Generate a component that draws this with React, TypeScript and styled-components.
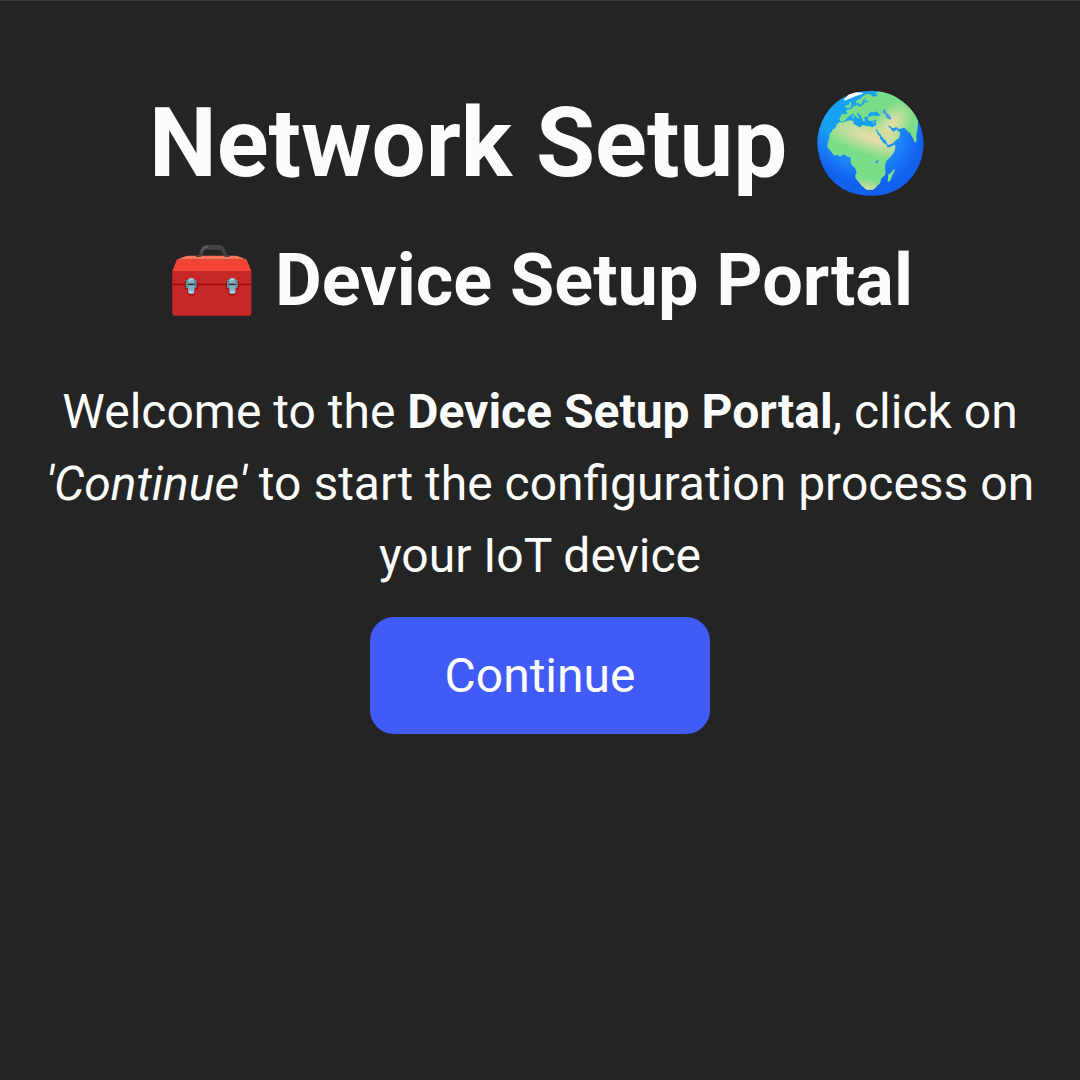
import React from 'react';
import styled, { createGlobalStyle } from 'styled-components';

const GlobalStyle = createGlobalStyle`
  body {
    margin: 0;
    background: #242424;
    color: #fcfcfc;
    font-family: Roboto, sans-serif;
  }
`;

const Page = styled.main`
  box-sizing: border-box;
  height: 1080px;
  padding-top: 89px;
  border-top: 1px solid #3a3a3a;
  text-align: center;
`;

const Title = styled.h1`
  margin: 0;
  font-size: 96px;
  line-height: 106px;
  font-weight: 700;
`;

const Subtitle = styled.h2`
  margin: 32px 0 0;
  font-size: 72px;
  line-height: 106px;
  font-weight: 700;
`;

const Message = styled.p`
  margin: 42px 0 0;
  font-size: 48px;
  line-height: 72px;
`;

const Button = styled.button`
  margin-top: 25px;
  width: 340px;
  height: 117px;
  padding: 0;
  border: 0;
  border-radius: 24px;
  background: #415cf6;
  color: #fcfcfc;
  font: 400 48px Roboto, sans-serif;
`;

export default function App() {
  return (
    <>
      <GlobalStyle />
      <Page>
        <Title>Network Setup 🌍</Title>
        <Subtitle>🧰 Device Setup Portal</Subtitle>
        <Message>
          Welcome to the <b>Device Setup Portal</b>, click on <i>'Continue'</i> to start the
          configuration process on your IoT device
        </Message>
        <Button type="button">Continue</Button>
      </Page>
    </>
  );
}
